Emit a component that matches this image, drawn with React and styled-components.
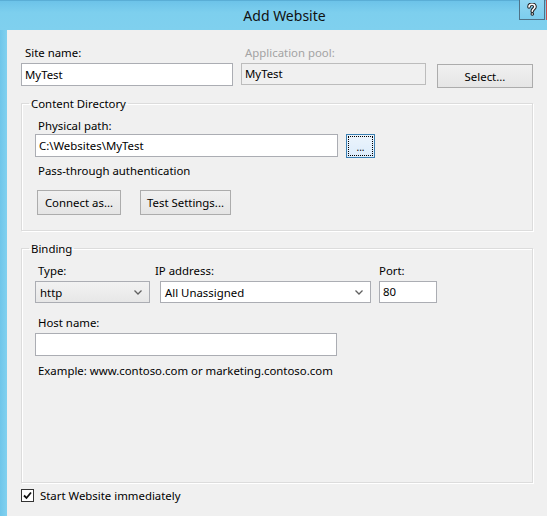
import React from "react";
import styled, { createGlobalStyle } from "styled-components";

const GlobalStyle = createGlobalStyle`
  html, body {
    margin: 0;
    padding: 0;
    background: #f0f0f0;
  }
  body {
    font-family: "Segoe UI", "Noto Sans", "Open Sans", sans-serif;
    font-size: 11.4px;
    color: #000;
  }
`;

const Window = styled.div`
  width: 547px;
  height: 516px;
  display: flex;
  flex-direction: column;
  overflow: hidden;
  background: #7ccdee;
`;

const TitleBar = styled.div`
  height: 30px;
  flex: none;
  display: flex;
  align-items: flex-start;
  background: linear-gradient(#6cc3e9, #7dcfee 40%, #7fd0ee);
  border-top: 1px solid #5aaed6;
  box-sizing: border-box;
`;

const Title = styled.div`
  flex: 1;
  text-align: center;
  font-size: 14px;
  line-height: 30px;
  padding-left: 50px;
  color: #111;
`;

const HelpButton = styled.div`
  width: 26px;
  height: 20px;
  margin-top: -1px;
  margin-right: 1px;
  box-sizing: border-box;
  border: 1px solid #4e7388;
  border-top: none;
  background: linear-gradient(#93d7f2, #7ccdee);
  display: flex;
  align-items: center;
  justify-content: center;
`;

const Chevron = () => (
  <svg width="8" height="5" viewBox="0 0 8 5">
    <path d="M0.5 0.5 L4 4 L7.5 0.5" fill="none" stroke="#606060" strokeWidth="1.3" />
  </svg>
);

const CloseEdge = styled.div`
  width: 1px;
  height: 20px;
  margin-top: -1px;
  background: #c7504a;
`;

const Frame = styled.div`
  flex: 1;
  display: flex;
`;

const LeftBorder = styled.div`
  width: 7px;
  flex: none;
  background: linear-gradient(90deg, #6fc6ea, #82d1ef);
`;

const Body = styled.div`
  flex: 1;
  background: #f0f0f0;
  padding: 15px 14px 0 14px;
  display: flex;
  flex-direction: column;
`;

const TopRow = styled.div`
  display: flex;
  align-items: flex-start;
`;

const Field = styled.div`
  display: flex;
  flex-direction: column;
  width: ${(p) => p.$w}px;
  margin-right: ${(p) => p.$mr || 0}px;
`;

const Label = styled.div`
  line-height: 15px;
  height: 15px;
  white-space: nowrap;
  color: ${(p) => (p.$disabled ? "#a3a3a3" : "#000")};
  margin-bottom: ${(p) => p.$gap ?? 3}px;
  margin-left: ${(p) => p.$indent ?? 3}px;
`;

const TextBox = styled.div`
  box-sizing: border-box;
  width: ${(p) => p.$w}px;
  height: ${(p) => p.$h || 23}px;
  border: 1px solid ${(p) => (p.$disabled ? "#bcbcbc" : "#abadb3")};
  background: ${(p) => (p.$disabled ? "#f0f0f0" : "#fff")};
  padding: 0 3px;
  line-height: ${(p) => (p.$h || 23) - 2}px;
  white-space: nowrap;
`;

const Button = styled.div`
  box-sizing: border-box;
  width: ${(p) => p.$w}px;
  height: ${(p) => p.$h || 24}px;
  margin-top: ${(p) => p.$mt || 0}px;
  margin-left: ${(p) => p.$ml || 0}px;
  border: 1px solid #acacac;
  background: linear-gradient(#f0f0f0, #e5e5e5);
  display: flex;
  align-items: center;
  justify-content: center;
  white-space: nowrap;
`;

const FocusButton = styled(Button)`
  border-color: #3c7fb1;
  background: linear-gradient(#ecf4fc, #dcecfc);
  padding: 1px;
  span {
    width: 100%;
    height: 100%;
    box-sizing: border-box;
    border: 1px dotted #000;
    display: flex;
    align-items: center;
    justify-content: center;
    font-size: 10px;
    padding-top: 2px;
  }
`;

const Group = styled.fieldset`
  margin: ${(p) => p.$mt}px 0 0 0;
  padding: 7px 13px ${(p) => p.$pb}px 13px;
  border: 1px solid #dcdcdc;
  box-shadow: inset 1px 1px 0 #fff, 1px 1px 0 #fff;
  min-width: 0;
`;

const Legend = styled.legend`
  padding: 0 2px;
  margin-left: -6px;
  line-height: 15px;
`;

const Row = styled.div`
  display: flex;
  align-items: flex-start;
  margin-top: ${(p) => p.$mt || 0}px;
`;

const Text = styled.div`
  line-height: 15px;
  margin-top: ${(p) => p.$mt || 0}px;
  margin-left: ${(p) => p.$indent || 0}px;
  white-space: nowrap;
`;

const Select = styled.div`
  box-sizing: border-box;
  width: ${(p) => p.$w}px;
  height: 22px;
  border: 1px solid #abadb3;
  background: ${(p) => (p.$gray ? "linear-gradient(#f2f2f2, #e7e7e7)" : "#fff")};
  display: flex;
  align-items: center;
  padding: 0 7px 0 4px;
  span {
    flex: 1;
  }
`;

const CheckRow = styled.div`
  display: flex;
  align-items: center;
  margin-top: 5px;
`;

const CheckBox = styled.div`
  width: 13px;
  height: 13px;
  box-sizing: border-box;
  border: 1px solid #333;
  background: #fff;
  display: flex;
  align-items: center;
  justify-content: center;
  margin-right: 6px;
`;

// white question mark with a dark outline, as on the caption button
const HelpGlyph = () => (
  <svg width="10" height="13" viewBox="0 0 10 13">
    <path
      d="M2 4 C2 2 3.3 1.2 5 1.2 C6.8 1.2 8 2.2 8 3.8 C8 5.4 6 5.8 5.5 7.2 L5.3 8.2"
      fill="none"
      stroke="#222"
      strokeWidth="3.6"
      strokeLinecap="round"
    />
    <path
      d="M2 4 C2 2 3.3 1.2 5 1.2 C6.8 1.2 8 2.2 8 3.8 C8 5.4 6 5.8 5.5 7.2 L5.3 8.2"
      fill="none"
      stroke="#fff"
      strokeWidth="1.6"
      strokeLinecap="round"
    />
    <circle cx="5.3" cy="11" r="1.8" fill="#222" />
    <circle cx="5.3" cy="11" r="0.8" fill="#fff" />
  </svg>
);

export default function App() {
  return (
    <>
      <GlobalStyle />
      <Window>
        <TitleBar>
          <Title>Add Website</Title>
          <HelpButton>
            <HelpGlyph />
          </HelpButton>
          <CloseEdge />
        </TitleBar>
        <Frame>
          <LeftBorder />
          <Body>
            <TopRow>
              <Field $w={212} $mr={8}>
                <Label $indent={4}>Site name:</Label>
                <TextBox $w={212}>MyTest</TextBox>
              </Field>
              <Field $w={185} $mr={11}>
                <Label $indent={4} $disabled>Application pool:</Label>
                <TextBox $w={185} $h={22} $disabled>MyTest</TextBox>
              </Field>
              <Button $w={96} $mt={19}>Select...</Button>
            </TopRow>

            <Group $mt={8} $pb={15}>
              <Legend>Content Directory</Legend>
              <Label $gap={1}>Physical path:</Label>
              <Row>
                <TextBox $w={303}>C:\Websites\MyTest</TextBox>
                <FocusButton $w={29} $ml={8}>
                  <span>...</span>
                </FocusButton>
              </Row>
              <Text $mt={5} $indent={3}>Pass-through authentication</Text>
              <Row $mt={12}>
                <Button $w={84} $h={25} $ml={2}>Connect as...</Button>
                <Button $w={91} $h={25} $ml={19}>Test Settings...</Button>
              </Row>
            </Group>

            <Group $mt={10} $pb={104}>
              <Legend>Binding</Legend>
              <Row>
                <Field $w={115} $mr={10}>
                  <Label>Type:</Label>
                  <Select $w={115} $gray>
                    <span>http</span>
                    <Chevron />
                  </Select>
                </Field>
                <Field $w={211} $mr={8}>
                  <Label $indent={-5}>IP address:</Label>
                  <Select $w={211}>
                    <span>All Unassigned</span>
                    <Chevron />
                  </Select>
                </Field>
                <Field $w={58}>
                  <Label $indent={0}>Port:</Label>
                  <TextBox $w={58} $h={22}>80</TextBox>
                </Field>
              </Row>
              <Row $mt={12}>
                <Field $w={302}>
                  <Label>Host name:</Label>
                  <TextBox $w={302}></TextBox>
                </Field>
              </Row>
              <Text $mt={7} $indent={3}>Example: www.contoso.com or marketing.contoso.com</Text>
            </Group>

            <CheckRow>
              <CheckBox>
                <svg width="9" height="9" viewBox="0 0 9 9">
                  <path d="M1 4.5 L3.5 7 L8 1.5" fill="none" stroke="#111" strokeWidth="1.8" />
                </svg>
              </CheckBox>
              <Text>Start Website immediately</Text>
            </CheckRow>
          </Body>
        </Frame>
      </Window>
    </>
  );
}
